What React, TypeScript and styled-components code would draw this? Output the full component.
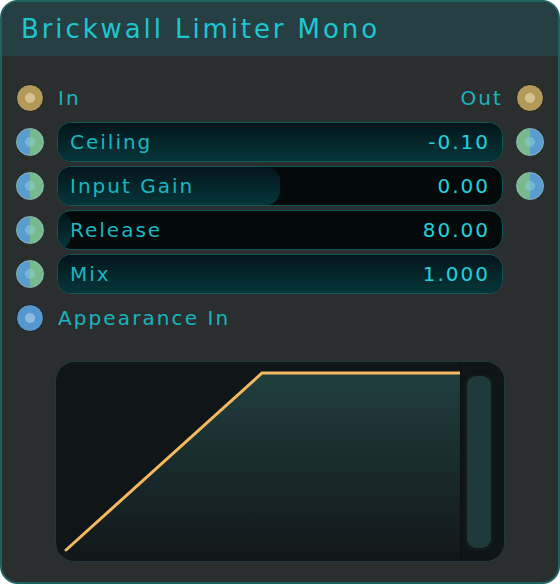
import React from "react";
import styled, { createGlobalStyle, css } from "styled-components";

const Global = createGlobalStyle`
  html, body { margin: 0; padding: 0; background: #ffffff; }
  body { font-family: "DejaVu Sans", "Liberation Sans", sans-serif; }
  * { box-sizing: border-box; }
`;

const Card = styled.div`
  width: 560px;
  height: 584px;
  border: 2px solid #1f6061;
  border-radius: 18px;
  background: #2b2e2f;
  overflow: hidden;
  display: flex;
  flex-direction: column;
`;

const Header = styled.div`
  height: 54px;
  background: #253f42;
  padding: 0 0 0 19px;
  display: flex;
  align-items: center;
`;

const Title = styled.h1`
  margin: 0;
  font-size: 26px;
  font-weight: 400;
  letter-spacing: 2.9px;
  color: #1ec6d2;
`;

const Body = styled.div`
  padding: 22px 14px 0 14px;
  display: grid;
  grid-template-columns: 28px 1fr 28px;
  grid-auto-rows: 40px;
  column-gap: 13px;
  row-gap: 4px;
  align-items: center;
`;

type PinKind = "gold" | "split" | "splitRev" | "blue" | "none";

const Pin = styled.div<{ $kind: PinKind }>`
  width: 28px;
  height: 28px;
  border-radius: 50%;
  position: relative;
  ${({ $kind }) =>
    $kind === "gold"
      ? css`
          background: #b49a58;
          border: 1.5px solid #1a1c1d;
        `
      : $kind === "blue"
      ? css`
          background: #5697cf;
          border: 1.5px solid #1a1c1d;
        `
      : $kind === "split"
      ? css`
          background: linear-gradient(90deg, #5a9bd2 50%, #79b98c 50%);
          border: 1.5px solid #80bcb4;
        `
      : $kind === "splitRev"
      ? css`
          background: linear-gradient(90deg, #79b98c 50%, #5a9bd2 50%);
          border: 1.5px solid #80bcb4;
        `
      : css`
          visibility: hidden;
        `}

  &::after {
    content: "";
    position: absolute;
    left: 50%;
    top: 50%;
    width: 10px;
    height: 10px;
    margin: -5px 0 0 -5px;
    border-radius: 50%;
    background: ${({ $kind }) =>
      $kind === "gold"
        ? "#d6c394"
        : $kind === "blue"
        ? "#8cbbe2"
        : "rgba(140, 210, 215, 0.55)"};
  }
`;

const IoRow = styled.div`
  display: flex;
  justify-content: space-between;
  align-items: center;
  padding: 0 0 0 1px;
  font-size: 20px;
  letter-spacing: 2.1px;
  color: #19b4bf;
`;

const Slider = styled.div`
  position: relative;
  height: 40px;
  border: 1px solid #11585b;
  border-radius: 14px;
  background: #04090a;
  overflow: hidden;
`;

const Fill = styled.div`
  position: absolute;
  left: 0;
  top: 0;
  bottom: 0;
  border-radius: 0 14px 14px 0;
  background: linear-gradient(180deg, #03151a 0%, #06363a 100%);
`;

const SliderText = styled.div`
  position: relative;
  height: 100%;
  display: flex;
  align-items: center;
  justify-content: space-between;
  padding: 0 12px 0 12px;
  font-size: 20px;
  letter-spacing: 2px;
`;

const Label = styled.span`
  color: #1bb6c1;
`;

const Value = styled.span`
  color: #20d2de;
`;

const GraphWrap = styled.div`
  padding: 23px 53px 0 53px;
`;

const Graph = styled.div`
  height: 201px;
  border: 1px solid #1d3b3d;
  border-radius: 20px;
  background: #101518;
  overflow: hidden;
  display: flex;
`;

const Plot = styled.div`
  flex: 1;
  position: relative;
`;

const Side = styled.div`
  width: 45px;
  padding: 14px 13px 13px 6px;
  background: #0f1417;
  border-left: 1px solid #0c1012;
  display: flex;
`;

const Track = styled.div`
  flex: 1;
  border-radius: 9px;
  background: #1f3a3a;
  box-shadow: 0 0 0 3px #12191b;
`;

type Param = {
  label: string;
  value: string;
  fill: number;
  right: boolean;
};

const params: Param[] = [
  { label: "Ceiling", value: "-0.10", fill: 1, right: true },
  { label: "Input Gain", value: "0.00", fill: 0.5, right: true },
  { label: "Release", value: "80.00", fill: 0.03, right: false },
  { label: "Mix", value: "1.000", fill: 1, right: false },
];

export default function App() {
  return (
    <>
      <Global />
      <Card>
        <Header>
          <Title>Brickwall Limiter Mono</Title>
        </Header>
        <Body>
          <Pin $kind="gold" />
          <IoRow>
            <span>In</span>
            <span>Out</span>
          </IoRow>
          <Pin $kind="gold" />

          {params.map((p) => (
            <React.Fragment key={p.label}>
              <Pin $kind="split" />
              <Slider>
                <Fill style={{ width: `${p.fill * 100}%` }} />
                <SliderText>
                  <Label>{p.label}</Label>
                  <Value>{p.value}</Value>
                </SliderText>
              </Slider>
              <Pin $kind={p.right ? "splitRev" : "none"} />
            </React.Fragment>
          ))}

          <Pin $kind="blue" />
          <IoRow>
            <span>Appearance In</span>
          </IoRow>
          <span />
        </Body>
        <GraphWrap>
          <Graph>
            <Plot>
              <svg width="404" height="199" viewBox="0 0 404 199">
                <defs>
                  <linearGradient id="area" x1="0" y1="0" x2="0" y2="1">
                    <stop offset="0%" stopColor="#213e3f" />
                    <stop offset="100%" stopColor="#111719" />
                  </linearGradient>
                </defs>
                <polygon points="10,188 206,11 404,11 404,199 0,199 0,188" fill="url(#area)" />
                <polygon points="0,188 10,188 0,199" fill="#101518" />
                <polyline
                  points="10,188 206,11 403,11"
                  fill="none"
                  stroke="#f4b860"
                  strokeWidth="3"
                  strokeLinecap="round"
                  strokeLinejoin="miter"
                />
              </svg>
            </Plot>
            <Side>
              <Track />
            </Side>
          </Graph>
        </GraphWrap>
      </Card>
    </>
  );
}
